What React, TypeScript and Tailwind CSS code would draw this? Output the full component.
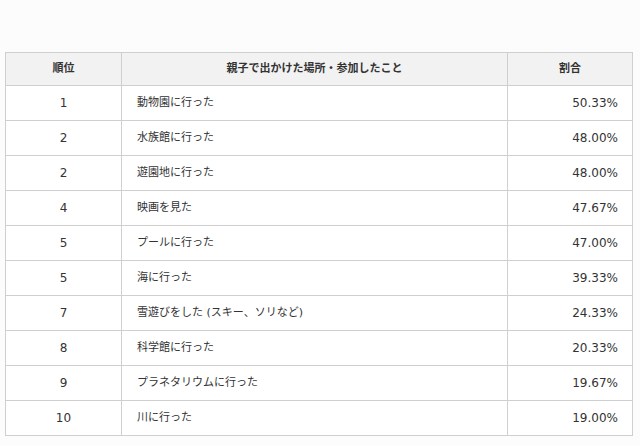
import React from 'react';

type Row = {
  rank: number;
  place: string;
  rate: string;
};

const rows: Row[] = [
  { rank: 1, place: '動物園に行った', rate: '50.33%' },
  { rank: 2, place: '水族館に行った', rate: '48.00%' },
  { rank: 2, place: '遊園地に行った', rate: '48.00%' },
  { rank: 4, place: '映画を見た', rate: '47.67%' },
  { rank: 5, place: 'プールに行った', rate: '47.00%' },
  { rank: 5, place: '海に行った', rate: '39.33%' },
  { rank: 7, place: '雪遊びをした (スキー、ソリなど)', rate: '24.33%' },
  { rank: 8, place: '科学館に行った', rate: '20.33%' },
  { rank: 9, place: 'プラネタリウムに行った', rate: '19.67%' },
  { rank: 10, place: '川に行った', rate: '19.00%' },
];

const font = { fontFamily: '"DejaVu Sans", "Noto Sans CJK JP", sans-serif' };

export default function App() {
  return (
    <div
      className="h-[446px] w-[640px] overflow-hidden bg-[#fcfcfc] px-[5px] pt-[52px] text-[#333]"
      style={font}>
      <table className="w-[627px] table-fixed border-collapse bg-white text-[11px]">
        <colgroup>
          <col className="w-[116px]" />
          <col className="w-[386px]" />
          <col className="w-[125px]" />
        </colgroup>
        <thead>
          <tr className="h-[33px] bg-[#f2f2f2]">
            <th className="border border-[#cfcfcf] text-center font-bold">順位</th>
            <th className="border border-[#cfcfcf] text-center font-bold">親子で出かけた場所・参加したこと</th>
            <th className="border border-[#cfcfcf] text-center font-bold">割合</th>
          </tr>
        </thead>
        <tbody>
          {rows.map((row, i) => (
            <tr key={i} className="h-[35px]">
              <td className="border border-[#cfcfcf] text-center text-[12px]">{row.rank}</td>
              <td className="border border-[#cfcfcf] pl-[15px]">{row.place}</td>
              <td className="border border-[#cfcfcf] pr-[14px] text-right text-[12px]">{row.rate}</td>
            </tr>
          ))}
        </tbody>
      </table>
    </div>
  );
}
